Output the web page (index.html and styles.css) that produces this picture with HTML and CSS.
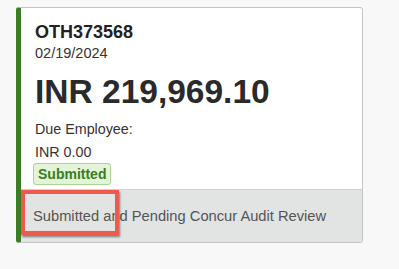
FILE: index.html
```html
<!DOCTYPE html>
<html lang="en">
<head>
    <meta charset="UTF-8">
    <title>Expense Report</title>
    <link rel="stylesheet" href="styles.css">
</head>
<body>
    <div class="report-card">
        <div class="card-body">
            <div class="report-id">OTH373568</div>
            <div class="report-date">02/19/2024</div>
            <div class="report-amount">INR 219,969.10</div>
            <div class="due-label">Due Employee:</div>
            <div class="due-value">INR 0.00</div>
            <span class="status-badge">Submitted</span>
        </div>
        <div class="card-footer">
            <span class="highlight-box"></span>
            Submitted and Pending Concur Audit Review
        </div>
    </div>
</body>
</html>
```

FILE: styles.css
```css
* {
    margin: 0;
    padding: 0;
    box-sizing: border-box;
}

body {
    background: #f8f8f8;
    font-family: 'Liberation Sans', Arial, sans-serif;
    color: #333;
    width: 399px;
    height: 269px;
    padding: 7px 0 0 16px;
}

.report-card {
    width: 347px;
    height: 236px;
    background: #fff;
    border: 1px solid #c4c4c4;
    border-left: 5px solid #3a7d23;
    border-radius: 3px;
    display: flex;
    flex-direction: column;
    overflow: hidden;
}

.card-body {
    flex: 1;
    padding: 13px 14px 0 14px;
}

.report-id {
    font-size: 18px;
    font-weight: bold;
    color: #222;
    line-height: 22px;
}

.report-date {
    font-size: 14.5px;
    margin-top: 2px;
    line-height: 17px;
}

.report-amount {
    font-size: 33.5px;
    font-weight: bold;
    color: #2a2a2a;
    line-height: 40px;
    margin-top: 10px;
}

.due-label {
    font-size: 14.3px;
    line-height: 17px;
    margin-top: 9px;
}

.due-value {
    font-size: 14.3px;
    line-height: 17px;
    margin-top: 6px;
}

.status-badge {
    display: inline-block;
    margin: 2px 0 0 -2px;
    padding: 2px 4px;
    font-size: 14px;
    font-weight: bold;
    color: #3a7d23;
    background: #e3f4d8;
    border: 1px solid #a9d58f;
    border-radius: 3px;
}

.card-footer {
    position: relative;
    height: 53px;
    background: #e2e3e3;
    border-top: 1px solid #d0d0d0;
    padding: 0 12px;
    font-size: 14.7px;
    color: #555;
    display: flex;
    align-items: center;
}

.highlight-box {
    position: absolute;
    left: 0;
    top: 0;
    width: 98px;
    height: 45px;
    border: 4px solid #ee5a4c;
    box-shadow: 1px 2px 2px rgba(0,0,0,0.45);
}
```
